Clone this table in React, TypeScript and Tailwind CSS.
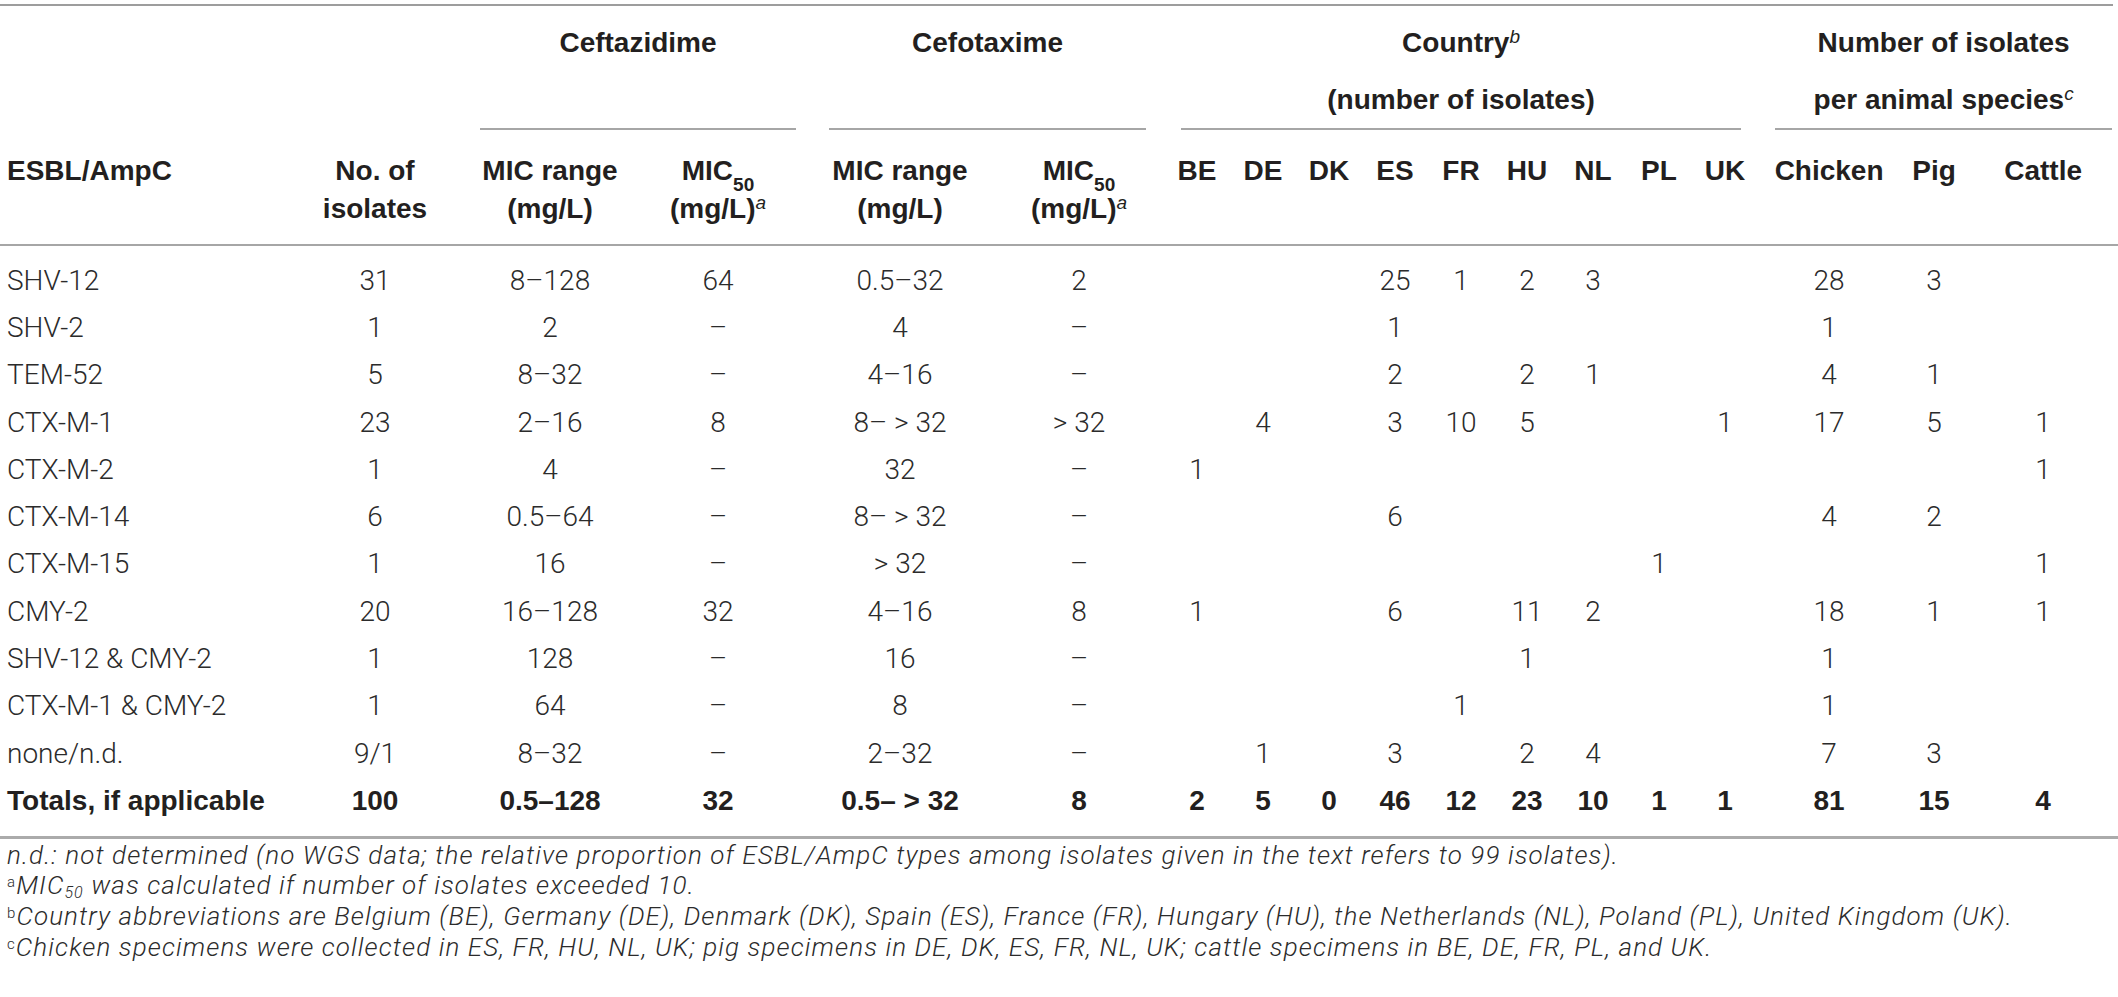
import React from 'react';

type Row = string[];

const rows: Row[] = [
  ['SHV-12', '31', '8–128', '64', '0.5–32', '2', '', '', '', '25', '1', '2', '3', '', '', '28', '3', ''],
  ['SHV-2', '1', '2', '–', '4', '–', '', '', '', '1', '', '', '', '', '', '1', '', ''],
  ['TEM-52', '5', '8–32', '–', '4–16', '–', '', '', '', '2', '', '2', '1', '', '', '4', '1', ''],
  ['CTX-M-1', '23', '2–16', '8', '8– > 32', '> 32', '', '4', '', '3', '10', '5', '', '', '1', '17', '5', '1'],
  ['CTX-M-2', '1', '4', '–', '32', '–', '1', '', '', '', '', '', '', '', '', '', '', '1'],
  ['CTX-M-14', '6', '0.5–64', '–', '8– > 32', '–', '', '', '', '6', '', '', '', '', '', '4', '2', ''],
  ['CTX-M-15', '1', '16', '–', '> 32', '–', '', '', '', '', '', '', '', '1', '', '', '', '1'],
  ['CMY-2', '20', '16–128', '32', '4–16', '8', '1', '', '', '6', '', '11', '2', '', '', '18', '1', '1'],
  ['SHV-12 & CMY-2', '1', '128', '–', '16', '–', '', '', '', '', '', '1', '', '', '', '1', '', ''],
  ['CTX-M-1 & CMY-2', '1', '64', '–', '8', '–', '', '', '', '', '1', '', '', '', '', '1', '', ''],
  ['none/n.d.', '9/1', '8–32', '–', '2–32', '–', '', '1', '', '3', '', '2', '4', '', '', '7', '3', ''],
];

const totals: Row = ['Totals, if applicable', '100', '0.5–128', '32', '0.5– > 32', '8', '2', '5', '0', '46', '12', '23', '10', '1', '1', '81', '15', '4'];

const countries = ['BE', 'DE', 'DK', 'ES', 'FR', 'HU', 'NL', 'PL', 'UK'];

const Mic50 = () => (
  <>
    MIC<sub className="text-[19px] align-[-6px]">50</sub>
  </>
);

// footnote marks: small, upright, kept inside the line box
const Mark = ({ c }: { c: string }) => (
  <span className="inline-block not-italic text-[15px] leading-none align-[7px]">{c}</span>
);

const headCell = 'align-top pt-[22px] pb-[16px] whitespace-nowrap';

export default function App() {
  return (
    <div className="w-[2118px] h-[997px] bg-white text-[#231f20] font-['Liberation_Sans',Arial,sans-serif] overflow-hidden">
      <div className="h-[4px]" />
      <div className="w-[2113px] h-[2px] bg-[#9d9d9d]" />
      <table className="table-fixed border-collapse w-[2118px]">
        <colgroup>
          <col className="w-[280px]" />
          <col className="w-[190px]" />
          <col className="w-[160px]" />
          <col className="w-[176px]" />
          <col className="w-[188px]" />
          <col className="w-[170px]" />
          {countries.map((c) => (
            <col key={c} className="w-[66px]" />
          ))}
          <col className="w-[142px]" />
          <col className="w-[68px]" />
          <col className="w-[150px]" />
        </colgroup>
        <thead className="text-[28px] font-bold">
          <tr>
            <th colSpan={2} />
            <th colSpan={2} className="align-top p-0">
              <div className="mx-[10px]">
                <div className="pt-[8px] leading-[57px] h-[122px]">Ceftazidime</div>
                <div className="h-[2px] bg-[#a6a6a6]" />
              </div>
            </th>
            <th colSpan={2} className="align-top p-0">
              <div className="ml-[23px] mr-[18px]">
                <div className="pt-[8px] leading-[57px] h-[122px]">Cefotaxime</div>
                <div className="h-[2px] bg-[#a6a6a6]" />
              </div>
            </th>
            <th colSpan={9} className="align-top p-0">
              <div className="mx-[17px]">
                <div className="pt-[8px] leading-[57px] h-[122px]">
                  <div>
                    Country<sup className="italic font-normal text-[19px]">b</sup>
                  </div>
                  <div>(number of isolates)</div>
                </div>
                <div className="h-[2px] bg-[#a6a6a6]" />
              </div>
            </th>
            <th colSpan={3} className="align-top p-0">
              <div className="ml-[17px] mr-[6px]">
                <div className="pt-[8px] leading-[57px] h-[122px]">
                  <div>Number of isolates</div>
                  <div>
                    per animal species<sup className="italic font-normal text-[19px]">c</sup>
                  </div>
                </div>
                <div className="h-[2px] bg-[#a6a6a6]" />
              </div>
            </th>
          </tr>
          <tr className="border-b-2 border-[#a6a6a6] leading-[38px]">
            <th className="text-left align-top pl-[7px] pt-[22px] pb-[16px]">ESBL/AmpC</th>
            <th className={headCell}>
              No. of
              <br />
              isolates
            </th>
            <th className={headCell}>
              MIC range
              <br />
              (mg/L)
            </th>
            <th className={headCell}>
              <Mic50 />
              <br />
              (mg/L)<sup className="italic font-normal text-[19px]">a</sup>
            </th>
            <th className={headCell}>
              MIC range
              <br />
              (mg/L)
            </th>
            <th className={headCell}>
              <Mic50 />
              <br />
              (mg/L)<sup className="italic font-normal text-[19px]">a</sup>
            </th>
            {countries.map((c) => (
              <th key={c} className={headCell}>
                {c}
              </th>
            ))}
            <th className={headCell}>Chicken</th>
            <th className={headCell}>Pig</th>
            <th className={headCell}>Cattle</th>
          </tr>
        </thead>
        <tbody className="text-[28px] text-[#2b2b2b]">
          <tr className="h-[12px]">
            <td colSpan={18} />
          </tr>
          {rows.map((r) => (
            <tr key={r[0]} className="h-[47.3px] font-['Roboto','Liberation_Sans',sans-serif] font-light">
              {r.map((v, i) => (
                <td key={i} className={i === 0 ? 'text-left pl-[7px] whitespace-nowrap' : 'text-center whitespace-nowrap'}>
                  {v}
                </td>
              ))}
            </tr>
          ))}
          <tr className="h-[47.3px] font-bold text-[#231f20]">
            {totals.map((v, i) => (
              <td key={i} className={i === 0 ? 'text-left pl-[7px] whitespace-nowrap' : 'text-center whitespace-nowrap'}>
                {v}
              </td>
            ))}
          </tr>
          <tr className="h-[11px]">
            <td colSpan={18} />
          </tr>
        </tbody>
      </table>
      <div className="h-[3px] bg-[#ababab]" />
      <div className="pl-[7px] pt-[1px] italic text-[26px] tracking-[1.1px] leading-[30.5px] text-[#2b2b2b] font-['Roboto','Liberation_Sans',sans-serif] font-light whitespace-nowrap">
        <p>
          n.d.: not determined (no WGS data; the relative proportion of ESBL/AmpC types among isolates given in the text refers to 99 isolates).
        </p>
        <p>
          <Mark c="a" />
          MIC<span className="inline-block text-[16px] leading-none align-[-4px]">50</span> was calculated if number of isolates exceeded 10.
        </p>
        <p>
          <Mark c="b" />
          Country abbreviations are Belgium (BE), Germany (DE), Denmark (DK), Spain (ES), France (FR), Hungary (HU), the Netherlands (NL), Poland (PL), United Kingdom (UK).
        </p>
        <p>
          <Mark c="c" />
          Chicken specimens were collected in ES, FR, HU, NL, UK; pig specimens in DE, DK, ES, FR, NL, UK; cattle specimens in BE, DE, FR, PL, and UK.
        </p>
      </div>
    </div>
  );
}
